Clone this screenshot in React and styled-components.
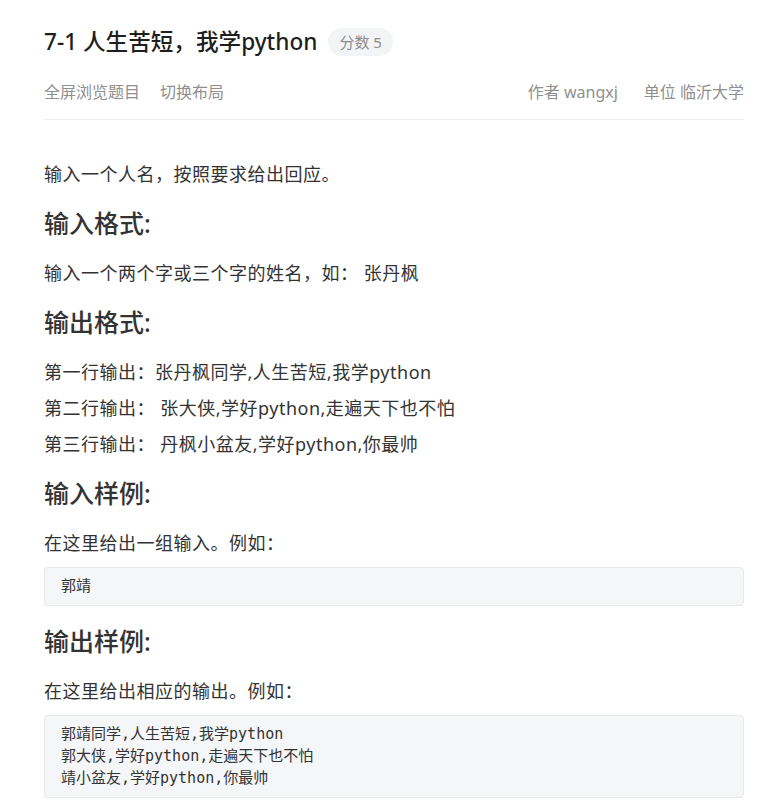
import React from "react";
import styled, { createGlobalStyle } from "styled-components";

const GlobalStyle = createGlobalStyle`
  body {
    margin: 0;
    background: #fff;
    font-family: "Noto Sans", "Noto Sans CJK SC", sans-serif;
  }
`;

const Page = styled.div`
  padding: 24px 23px 0 44px;
`;

const Header = styled.div`
  border-bottom: 1px solid #eeeeee;
  padding-bottom: 15px;
`;

const TitleRow = styled.div`
  display: flex;
  align-items: center;
  gap: 11px;
`;

const Title = styled.h1`
  margin: 0;
  font-size: 22.6px;
  font-weight: 500;
  color: #1f1f1f;
  line-height: 36px;
`;

const Badge = styled.span`
  background: #f3f4f6;
  color: #8c8c8c;
  font-size: 15px;
  border-radius: 14px;
  padding: 0 11px;
  line-height: 28px;
`;

const MetaRow = styled.div`
  display: flex;
  justify-content: space-between;
  margin-top: 20px;
  font-size: 16px;
  color: #8f8f8f;
  line-height: 24px;
`;

const MetaGroup = styled.div`
  display: flex;
  gap: ${(p) => p.$gap || 20}px;
`;

const MetaItem = styled.span``;

const Content = styled.div`
  padding-top: 40px;
  color: #333333;
`;

const Para = styled.p`
  margin: 0 0 8px;
  font-size: 18px;
  letter-spacing: 0.5px;
  line-height: 28px;
`;

const Heading = styled.h2`
  margin: 18px 0 19px;
  font-size: 25px;
  font-weight: 500;
  line-height: 34px;
  color: #333333;
`;

const Code = styled.pre`
  margin: 10px 0 16px;
  background: #f5f6f8;
  border: 1px solid #e8e9eb;
  border-radius: 4px;
  padding: 7px 16px 8px;
  font-family: "DejaVu Sans Mono", "Noto Sans CJK SC", monospace;
  font-size: 15px;
  line-height: 22px;
  color: #333333;
  white-space: pre;
`;

export default function App() {
  return (
    <>
      <GlobalStyle />
      <Page>
        <Header>
          <TitleRow>
            <Title>7-1 人生苦短，我学python</Title>
            <Badge>分数 5</Badge>
          </TitleRow>
          <MetaRow>
            <MetaGroup>
              <MetaItem>全屏浏览题目</MetaItem>
              <MetaItem>切换布局</MetaItem>
            </MetaGroup>
            <MetaGroup $gap={26}>
              <MetaItem>作者 wangxj</MetaItem>
              <MetaItem>单位 临沂大学</MetaItem>
            </MetaGroup>
          </MetaRow>
        </Header>
        <Content>
          <Para>输入一个人名，按照要求给出回应。</Para>
          <Heading>输入格式:</Heading>
          <Para>输入一个两个字或三个字的姓名，如： 张丹枫</Para>
          <Heading>输出格式:</Heading>
          <Para>第一行输出：张丹枫同学,人生苦短,我学python</Para>
          <Para>第二行输出： 张大侠,学好python,走遍天下也不怕</Para>
          <Para>第三行输出： 丹枫小盆友,学好python,你最帅</Para>
          <Heading>输入样例:</Heading>
          <Para>在这里给出一组输入。例如：</Para>
          <Code>郭靖</Code>
          <Heading>输出样例:</Heading>
          <Para>在这里给出相应的输出。例如：</Para>
          <Code>{`郭靖同学,人生苦短,我学python
郭大侠,学好python,走遍天下也不怕
靖小盆友,学好python,你最帅`}</Code>
        </Content>
      </Page>
    </>
  );
}
